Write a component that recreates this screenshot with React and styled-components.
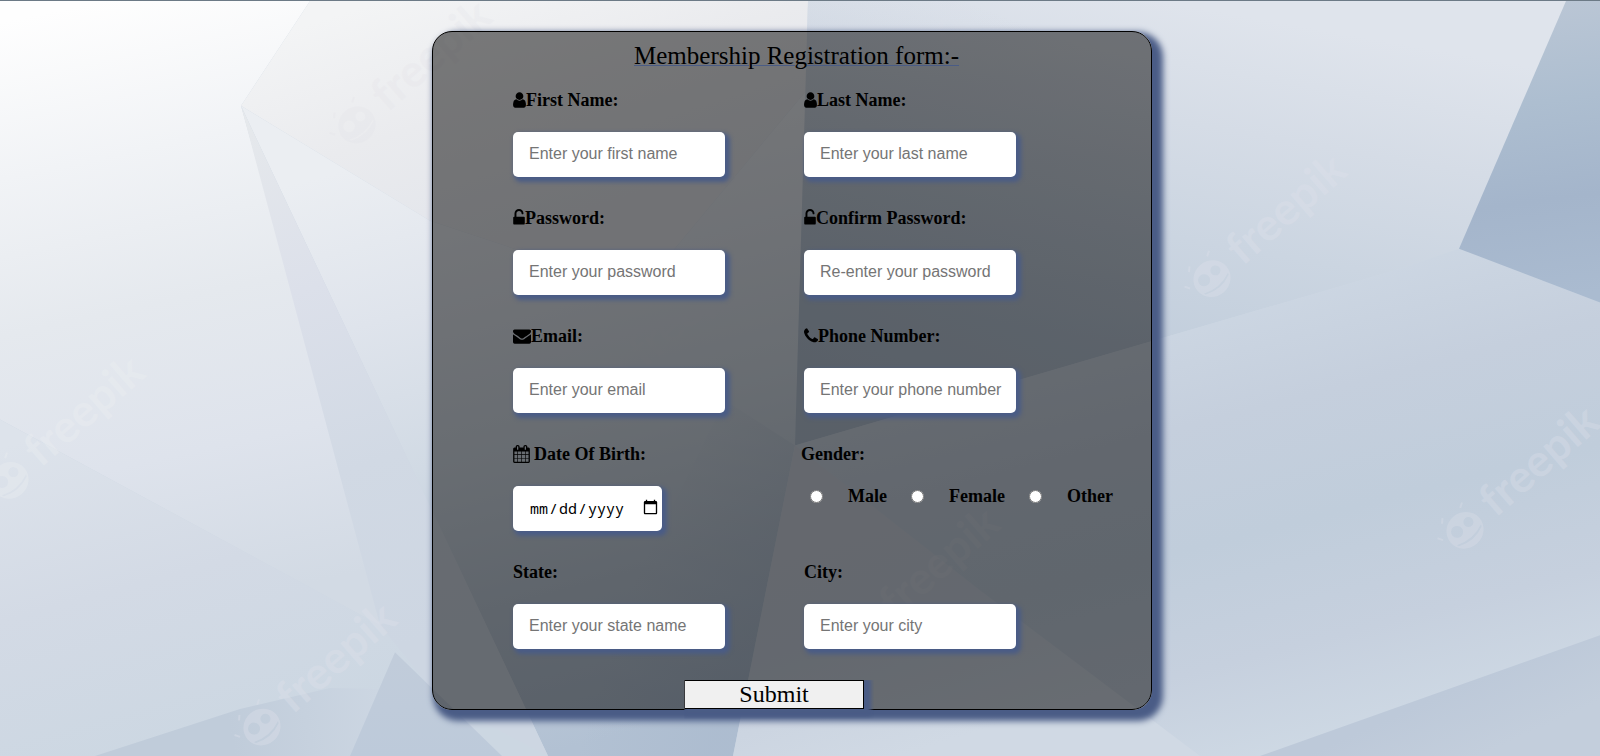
import React from "react";
import styled, { createGlobalStyle } from "styled-components";

const GlobalStyle = createGlobalStyle`
  *, *::before, *::after { box-sizing: border-box; }
  body { margin: 0; font-family: "Liberation Serif", "Times New Roman", serif; color: #000; }
`;

const Page = styled.div`
  position: relative;
  isolation: isolate;
  min-height: 100vh;
  padding: 30px 0 46px;
  border-top: 1px solid #6c7a86;
  overflow: hidden;
`;

const Backdrop = styled.svg`
  position: absolute;
  inset: 0;
  z-index: -1;
  width: 100%;
  height: 100%;
`;

const Card = styled.form`
  width: 45%;
  min-width: 720px;
  margin-left: 27%;
  border: 1px solid #000;
  border-radius: 20px;
  background: rgba(0, 0, 0, 0.5);
  box-shadow: 6px 6px 6px 5px #4a5c86;
`;

const Title = styled.h1`
  margin: 0 0 0 28%;
  padding-top: 9px;
  font-size: 25px;
  font-weight: 400;
  line-height: 30px;
  text-decoration: underline 1px #4a5c86;
`;

const Fields = styled.div`
  display: grid;
  grid-template-columns: 291px 1fr;
  padding: 17px 0 2px 80px;
`;

const Field = styled.div`
  display: flex;
  flex-direction: column;
  align-items: flex-start;
  gap: 20px;
  height: 118px;
`;

const GenderField = styled.fieldset`
  min-width: 0;
  height: 118px;
  margin: 0 0 0 -3px;
  padding: 0;
  border: 0;
`;

const labelText = `
  display: flex;
  align-items: center;
  height: 24px;
  padding: 0;
  font-size: 18px;
  font-weight: 700;
  line-height: 24px;
`;

const Label = styled.label`
  ${labelText}
  gap: ${(p) => (p.$spaced ? "4px" : "0")};
`;

const Legend = styled.legend`
  ${labelText}
`;

const Glyph = styled.svg`
  flex: none;
  height: 18px;
  fill: #000;
`;

const Input = styled.input`
  width: ${(p) => (p.type === "date" ? "149px" : "212px")};
  height: 45px;
  padding: ${(p) => (p.type === "date" ? "0 3px 2px 16px" : "0 0 2px 16px")};
  border: 0;
  border-radius: 5px;
  background: #fff;
  box-shadow: 3px 3px 4px 2px #4a5c86;
  color: #000;
  font-family: ${(p) =>
    p.type === "date" ? '"Noto Sans Mono", "DejaVu Sans Mono", monospace' : '"Liberation Sans", Arial, sans-serif'};
  font-size: ${(p) => (p.type === "date" ? "15px" : "16px")};

  &::placeholder { color: #757575; opacity: 1; }
  &::-webkit-calendar-picker-indicator { width: 17px; height: 17px; padding: 0; }
`;

const Options = styled.div`
  display: flex;
  align-items: center;
  gap: 24px;
  padding: 18px 0 0 9px;
`;

const Option = styled.label`
  ${labelText}
  gap: 25px;
`;

const Radio = styled.input`
  width: 13px;
  height: 13px;
  margin: 0;
`;

const Submit = styled.button`
  display: block;
  width: 25%;
  height: 29px;
  margin-left: 35%;
  padding: 0;
  border: 1px solid #000;
  background: #f0f0f0;
  box-shadow: 3px 3px 4px 4px #4a5c86;
  clip-path: inset(0 -10px -10px 0);
  color: #000;
  font-family: inherit;
  font-size: 24px;
  line-height: 27px;
`;

const glyphs = {
  user: {
    x: 256,
    w: 1280,
    px: 13,
    d: "M1536 1399q0 109-62.5 187t-150.5 78h-854q-88 0-150.5-78t-62.5-187q0-85 8.5-160.5t31.5-152 58.5-131 94-89 134.5-34.5q131 128 313 128t313-128q76 0 134.5 34.5t94 89 58.5 131 31.5 152 8.5 160.5zm-256-887q0 159-112.5 271.5t-271.5 112.5-271.5-112.5-112.5-271.5 112.5-271.5 271.5-112.5 271.5 112.5 112.5 271.5z",
  },
  unlock: {
    x: 320,
    w: 1152,
    px: 12,
    d: "M1376 768q40 0 68 28t28 68v576q0 40-28 68t-68 28h-960q-40 0-68-28t-28-68v-576q0-40 28-68t68-28h32v-320q0-185 131.5-316.5t316.5-131.5 316.5 131.5 131.5 316.5q0 26-19 45t-45 19h-64q-26 0-45-19t-19-45q0-106-75-181t-181-75-181 75-75 181v320h736z",
  },
  envelope: {
    x: 0,
    w: 1792,
    px: 18,
    d: "M1792 710v794q0 66-47 113t-113 47h-1472q-66 0-113-47t-47-113v-794q44 49 101 87 362 246 497 345 57 42 92.5 65.5t94.5 48 110 24.5h2q51 0 110-24.5t94.5-48 92.5-65.5q170-123 498-345 57-39 100-87zm0-294q0 79-49 151t-122 123q-376 261-468 325-10 7-42.5 31t-54 38.5-52 32.5-57.5 27-50 9h-2q-23 0-50-9t-57.5-27-52-32.5-54-38.5-42.5-31q-91-64-262-182.5t-205-142.5q-62-42-117-115.5t-55-136.5q0-78 41.5-130t118.5-52h1472q65 0 112.5 47t47.5 113z",
  },
  phone: {
    x: 192,
    w: 1408,
    px: 14,
    d: "M1600 1240q0 27-10 70.5t-21 68.5q-21 50-122 106-94 51-186 51-27 0-53-3.5t-57.5-12.5-47-14.5-55.5-20.5-49-18q-98-35-175-83-127-79-264-216t-216-264q-48-77-83-175-3-9-18-49t-20.5-55.5-14.5-47-12.5-57.5-3.5-53q0-92 51-186 56-101 106-122 25-11 68.5-21t70.5-10q14 0 21 3 18 6 53 76 11 19 30 54t35 63.5 31 53.5q3 4 17.5 25t21.5 35.5 7 28.5q0 20-28.5 50t-62 55-62 53-28.5 46q0 9 5 22.5t8.5 20.5 14 24 11.5 19q76 137 174 235t235 174q2 1 19 11.5t24 14 20.5 8.5 22.5 5q18 0 46-28.5t53-62 55-62 50-28.5q14 0 28.5 7t35.5 21.5 25 17.5q25 15 53.5 31t63.5 35 54 30q70 35 76 53 3 7 3 21z",
  },
  calendar: {
    x: 64,
    w: 1664,
    px: 17,
    d: "M192 1664h288v-288h-288v288zm352 0h320v-288h-320v288zm-352-352h288v-320h-288v320zm352 0h320v-320h-320v320zm-352-384h288v-288h-288v288zm736 736h320v-288h-320v288zm-384-736h320v-288h-320v288zm768 736h288v-288h-288v288zm-384-352h320v-320h-320v320zm-352-864v-288q0-13-9.5-22.5t-22.5-9.5h-64q-13 0-22.5 9.5t-9.5 22.5v288q0 13 9.5 22.5t22.5 9.5h64q13 0 22.5-9.5t9.5-22.5zm736 864h288v-320h-288v320zm-384-384h320v-288h-320v288zm384 0h288v-288h-288v288zm32-480v-288q0-13-9.5-22.5t-22.5-9.5h-64q-13 0-22.5 9.5t-9.5 22.5v288q0 13 9.5 22.5t22.5 9.5h64q13 0 22.5-9.5t9.5-22.5zm384-64v1280q0 52-38 90t-90 38h-1408q-52 0-90-38t-38-90v-1280q0-52 38-90t90-38h128v-96q0-66 47-113t113-47h64q66 0 113 47t47 113v96h384v-96q0-66 47-113t113-47h64q66 0 113 47t47 113v96h128q52 0 90 38t38 90z",
  },
};

function Icon({ name }) {
  const g = glyphs[name];
  return (
    <Glyph width={g.px} viewBox={`${g.x} 0 ${g.w} 1792`} aria-hidden="true">
      <path d={g.d} />
    </Glyph>
  );
}

// Each facet: points, gradient line (x1 y1 x2 y2) and its colour stops.
const facets = [
  ["0,0 310,0 241,105 367,554 380,625 0,419", [100, 0, 230, 600], ["#fefefe", "#f1f3f6", "#e5e9ee", "#dee3ec", "#d2dae4"]],
  ["0,419 380,625 440,650 560,756 0,756", [60, 430, 150, 756], ["#dde3eb", "#d3dae5", "#ccd7e2"]],
  ["310,0 808,0 806,90 640,290 430,220 241,105", [380, 0, 460, 250], ["#f3f4f5", "#eaebee", "#e2e5eb"]],
  ["241,105 430,220 640,290 806,90 795,445 740,756 548,756", [380, 160, 540, 756], ["#ebeef2", "#dfe4ec", "#d1dae4", "#bfcbd9", "#b2c1d3"]],
  ["241,105 548,756 440,700 380,625", [260, 110, 420, 640], ["#e6e9ec", "#dce0ea", "#d1d9e4", "#cdd6e2"]],
  ["795,445 725,400 548,756 733,756", [640, 560, 760, 600], ["rgba(130,150,180,0)", "rgba(130,150,180,0.1)"]],
  ["808,0 1600,0 1600,302 1459,248 1400,268 795,445", [1160, 0, 1100, 340], ["#dfe4ec", "#d5dce6", "#cbd5e1", "#c2cedc"]],
  ["808,0 795,445 1151,341 1151,0", [1000, 10, 860, 380], ["rgba(120,140,165,0)", "rgba(120,140,165,0.2)"]],
  ["795,445 1400,268 1459,248 1600,302 1600,756 733,756", [1230, 290, 1350, 756], ["#cdd7e3", "#c5cfdd", "#c0cddb", "#c6d0de", "#cfdae5"]],
  ["795,445 980,590 1200,756 733,756", [820, 500, 900, 756], ["#cbd1dc", "#c8d1de", "#d0d9e4"]],
  ["1566,0 1600,0 1600,302 1459,248", [1560, 0, 1600, 290], ["#bac6d5", "#adbed0", "#a4b5cb", "#aabbd0"]],
  ["1600,635 1600,756 1260,756", [1450, 690, 1480, 756], ["#bdc9d9", "#c3cedc"]],
  ["95,756 240,709 330,688 440,690 500,756", [230, 730, 380, 700], ["#c0ccda", "#ccd6e2"]],
  ["395,652 350,756 502,756", [395, 660, 395, 756], ["#c1ccda", "#bdcada"]],
];

const marks = [
  { x: 10, y: 480, opacity: 0.35, color: "#edf0f2" },
  { x: 357, y: 124, opacity: 0.2, color: "#e0dfe6" },
  { x: 262, y: 727, opacity: 0.4 },
  { x: 1212, y: 278, opacity: 0.4 },
  { x: 1465, y: 530, opacity: 0.35 },
  { x: 614, y: 380, opacity: 0.2 },
  { x: 865, y: 632, opacity: 0.25 },
  { x: 957, y: 26, opacity: 0.2, face: true },
];

function Facets() {
  return (
    <Backdrop viewBox="0 0 1600 756" preserveAspectRatio="none" aria-hidden="true">
      <defs>
        {facets.map(([, [x1, y1, x2, y2], stops], i) => (
          <linearGradient key={i} id={`facet${i}`} gradientUnits="userSpaceOnUse" x1={x1} y1={y1} x2={x2} y2={y2}>
            {stops.map((c, n) => (
              <stop key={n} offset={n / (stops.length - 1)} stopColor={c} />
            ))}
          </linearGradient>
        ))}
      </defs>
      <rect width="1600" height="756" fill="#cdd7e2" />
      {facets.map(([points], i) => (
        <polygon key={i} points={points} fill={`url(#facet${i})`} />
      ))}
      {marks.map(({ x, y, opacity, face, color = "#dde0ea" }, i) => (
        <g key={i} transform={`translate(${x} ${y}) rotate(-41)`} fill={color} opacity={opacity}>
          <path
            fillRule="evenodd"
            d="M-19 0a19 18 0 1 0 38 0a19 18 0 1 0-38 0zM-13-4a6 6 0 1 0 12 0a6 6 0 1 0-12 0zM3-4a5 5 0 1 0 10 0a5 5 0 1 0-10 0zM-16 6q16 7 32 0l-1 2q-15 7-30 0z"
          />
          <path d="M-13-20l4-4M11-20l5-3M-23-7l-3-5" stroke={color} strokeWidth="2" />
          {!face && (
            <text x="31" y="11" fontFamily="Lato, sans-serif" fontWeight="700" fontSize="45">
              freepik
            </text>
          )}
        </g>
      ))}
    </Backdrop>
  );
}

function TextField({ id, label, icon, spaced, ...input }) {
  return (
    <Field>
      <Label htmlFor={id} $spaced={spaced}>
        {icon && <Icon name={icon} />}
        {label}
      </Label>
      <Input id={id} name={id} {...input} />
    </Field>
  );
}

export default function App() {
  return (
    <>
      <GlobalStyle />
      <Page>
        <Facets />
        <Card onSubmit={(e) => e.preventDefault()}>
          <Title>Membership Registration form:-</Title>
          <Fields>
            <TextField id="firstName" label="First Name:" icon="user" type="text" placeholder="Enter your first name" />
            <TextField id="lastName" label="Last Name:" icon="user" type="text" placeholder="Enter your last name" />
            <TextField id="password" label="Password:" icon="unlock" type="password" placeholder="Enter your password" />
            <TextField id="confirm" label="Confirm Password:" icon="unlock" type="password" placeholder="Re-enter your password" />
            <TextField id="email" label="Email:" icon="envelope" type="email" placeholder="Enter your email" />
            <TextField id="phone" label="Phone Number:" icon="phone" type="tel" placeholder="Enter your phone number" />
            <TextField id="dob" label="Date Of Birth:" icon="calendar" spaced type="date" />
            <GenderField>
              <Legend>Gender:</Legend>
              <Options>
                {["Male", "Female", "Other"].map((g) => (
                  <Option key={g}>
                    <Radio type="radio" name="gender" value={g} />
                    {g}
                  </Option>
                ))}
              </Options>
            </GenderField>
            <TextField id="state" label="State:" type="text" placeholder="Enter your state name" />
            <TextField id="city" label="City:" type="text" placeholder="Enter your city" />
          </Fields>
          <Submit type="submit">Submit</Submit>
        </Card>
      </Page>
    </>
  );
}
